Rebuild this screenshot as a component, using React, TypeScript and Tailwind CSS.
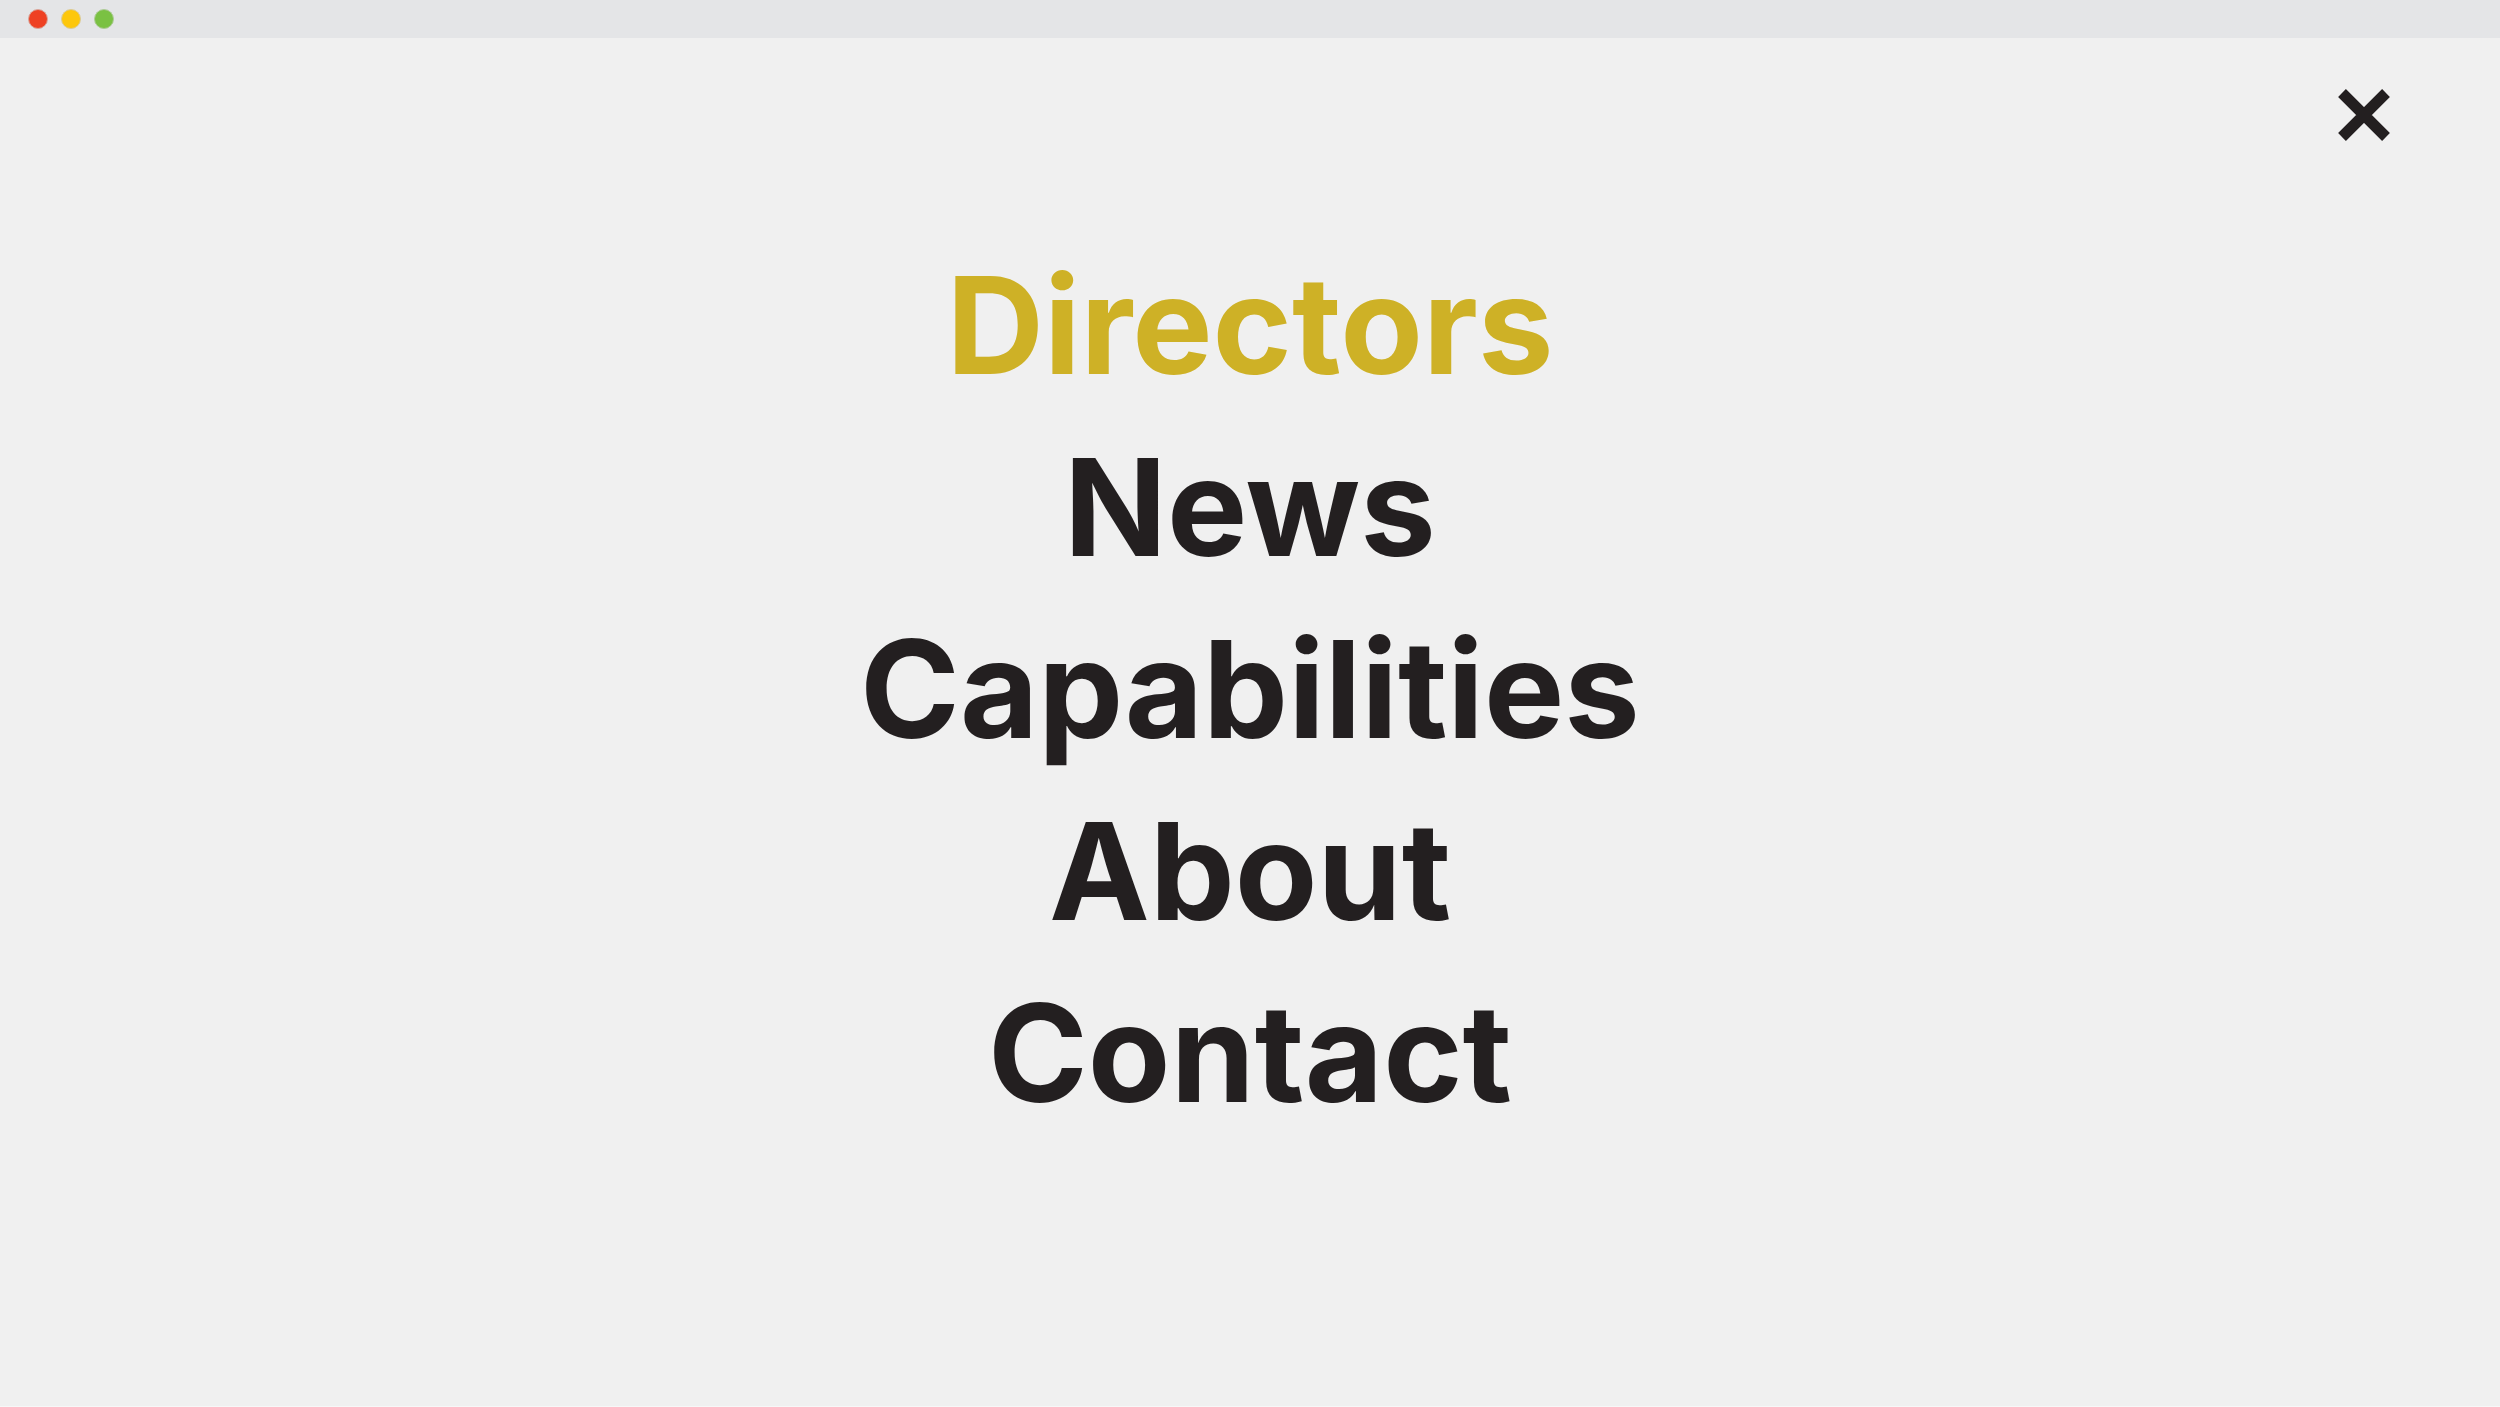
const items = ["Directors", "News", "Capabilities", "About", "Contact"];

export default function App() {
  return (
    <div className="flex min-h-screen flex-col border-b border-[#f7f7f7] bg-[#f0f0f0] font-['Inter',sans-serif] text-[#231f20]">
      <header className="flex h-[38px] items-center gap-[13px] bg-[#e4e5e7] pl-7">
        <button type="button" aria-label="Close window" className="size-5 rounded-full border border-[#d9a79c] bg-[#ee4123]" />
        <button type="button" aria-label="Minimise window" className="size-5 rounded-full border border-[#dccb94] bg-[#fdc70c]" />
        <button type="button" aria-label="Zoom window" className="size-5 rounded-full border border-[#aecb98] bg-[#7ac143]" />
      </header>
      <main className="flex flex-col">
        <button type="button" aria-label="Close menu" className="mt-[51px] mr-[110px] size-[52px] self-end">
          <svg viewBox="0 0 52 52" className="size-full" stroke="currentColor" strokeWidth="11" aria-hidden="true">
            <path d="M4 4L48 48M48 4L4 48" />
          </svg>
        </button>
        <nav aria-label="Main" className="mt-[93px]">
          <ul className="flex flex-col items-center text-[135px] leading-[182px] font-bold">
            {items.map((item, i) => (
              <li key={item}>
                <a href={`#${item.toLowerCase()}`} className={i === 0 ? "text-[#ceb126]" : "hover:text-[#ceb126]"}>
                  {item}
                </a>
              </li>
            ))}
          </ul>
        </nav>
      </main>
    </div>
  );
}
